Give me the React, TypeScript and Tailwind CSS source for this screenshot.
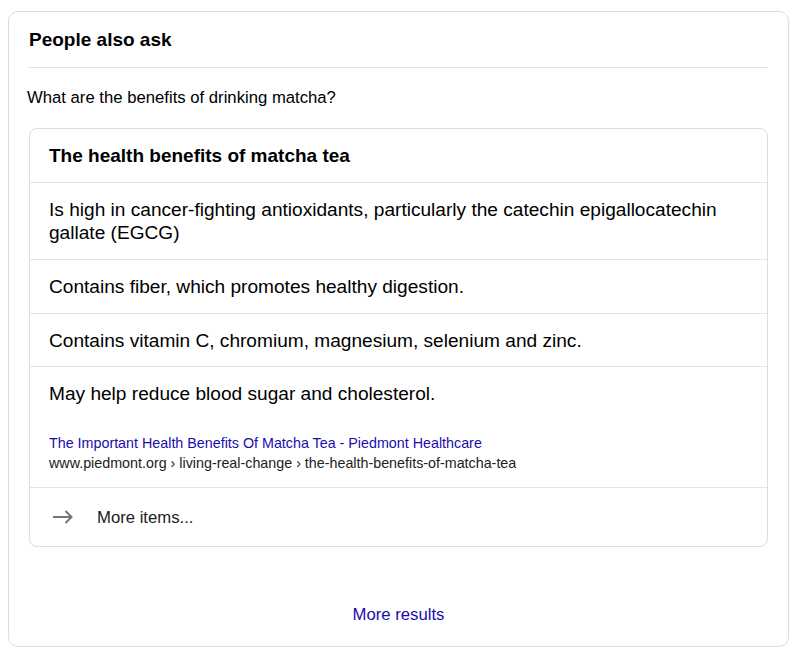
import React from "react";

export default function App() {
  return (
    <div
      className="w-[800px] h-[659px] bg-white pt-[11px] pl-[8px]"
      style={{ fontFamily: '"Liberation Sans", Arial, sans-serif' }}
    >
      <div className="w-[781px] h-[636px] border border-[#dadce0] rounded-[10px] px-[20px] flex flex-col text-[#202124]">
        <div className="h-[55px] flex items-center text-[19px] font-bold leading-[24px] text-[#000]">
          People also ask
        </div>
        <div className="h-px bg-[#e2e3e6]" />
        <div className="pt-[20px] pb-[20px] text-[16.7px] leading-[20px] -ml-[2px] text-[#000]">
          What are the benefits of drinking matcha?
        </div>
        <div className="border border-[#dadce0] rounded-[8px] flex flex-col text-[19.1px] leading-[23px] text-[#000]">
          <div className="h-[54px] flex items-center px-[19px] font-bold text-[19px] border-b border-[#e2e3e6]">
            The health benefits of matcha tea
          </div>
          <div className="py-[15px] px-[19px] border-b border-[#e2e3e6]">
            Is high in cancer-fighting antioxidants, particularly the catechin epigallocatechin
            <br />
            gallate (EGCG)
          </div>
          <div className="h-[54px] flex items-center px-[19px] border-b border-[#e2e3e6]">
            Contains fiber, which promotes healthy digestion.
          </div>
          <div className="h-[53px] flex items-center px-[19px] border-b border-[#e2e3e6]">
            Contains vitamin C, chromium, magnesium, selenium and zinc.
          </div>
          <div className="pt-[15px] pb-[14px] px-[19px] border-b border-[#e2e3e6] flex flex-col">
            <div>May help reduce blood sugar and cholesterol.</div>
            <div className="mt-[28px] text-[14.3px] leading-[20px] text-[#1a0dab]">
              The Important Health Benefits Of Matcha Tea - Piedmont Healthcare
            </div>
            <div className="text-[14.3px] leading-[20px] text-[#202124]">
              www.piedmont.org › living-real-change › the-health-benefits-of-matcha-tea
            </div>
          </div>
          <div className="h-[58px] flex items-center pl-[23px] text-[16.7px]">
            <svg width="20" height="14" viewBox="0 0 20 14" className="shrink-0">
              <path
                d="M0 7H18.5M12.5 1L18.5 7L12.5 13"
                fill="none"
                stroke="#70757a"
                strokeWidth="2"
              />
            </svg>
            <span className="ml-[24px] text-[#202124]">More items...</span>
          </div>
        </div>
        <div className="mt-[58px] text-center text-[16.7px] leading-[20px] text-[#1a0dab]">
          More results
        </div>
      </div>
    </div>
  );
}
